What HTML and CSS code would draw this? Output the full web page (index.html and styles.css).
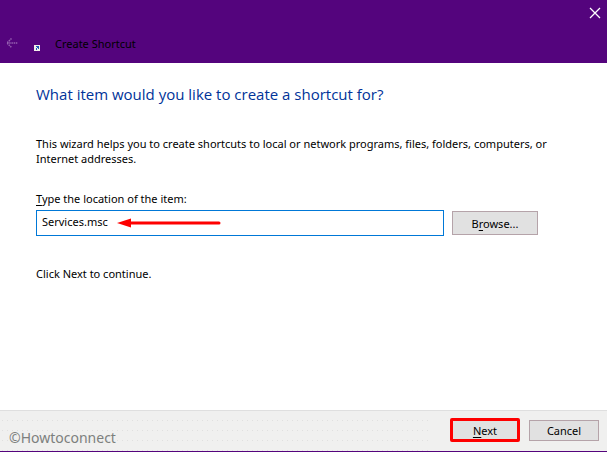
FILE: index.html
```html
<!DOCTYPE html>
<html lang="en">
<head>
<meta charset="utf-8">
<title>Create Shortcut</title>
<link rel="stylesheet" href="styles.css">
</head>
<body>
<form class="wizard">
  <header class="titlebar">
    <div class="window-controls">
      <button class="icon-button" type="button" aria-label="Close">
        <svg width="12" height="12" viewBox="0 0 12 12"><path d="M1 1l10 10M11 1L1 11" fill="none" stroke="#fff" stroke-width="1.3"/></svg>
      </button>
    </div>
    <div class="caption">
      <button class="icon-button back" type="button" aria-label="Back" disabled>
        <svg width="12" height="10" viewBox="0 0 12 10"><path d="M5.5 .5L1 5l4.500 4.500M1 5h11" fill="none" stroke="#9560b0" stroke-width="1.500" stroke-dasharray="1.500 .7"/></svg>
      </button>
      <svg class="shortcut-icon" width="6" height="6" viewBox="0 0 6 6"><path fill="#f1eee9" d="M0 0h6v6H0z"/><path fill="#1958b8" d="M2 1h3v3H4V3H3v2H2V3h1V2H2z"/></svg>
      <span class="title">Create Shortcut</span>
    </div>
  </header>
  <main class="content">
    <h1>What item would you like to create a shortcut for?</h1>
    <p class="intro">This wizard helps you to create shortcuts to local or network programs, files, folders, computers, or<br>Internet addresses.</p>
    <label for="location"><u>T</u>ype the location of the item:</label>
    <div class="location-row">
      <div class="field">
        <input id="location" type="text" value="Services.msc">
        <svg class="arrow" width="104" height="10" viewBox="0 0 104 10"><path d="M12 5h90" stroke="#fe0000" stroke-width="3" stroke-linecap="round"/><path d="M0 5L14 .5v9z" fill="#fe0000"/></svg>
      </div>
      <button class="button" type="button"><span>B<u>r</u>owse...</span></button>
    </div>
    <p class="hint">Click Next to continue.</p>
  </main>
  <footer class="footer">
    <span class="watermark">©Howtoconnect</span>
    <button class="button next" type="submit"><span><u>N</u>ext</span></button>
    <button class="button cancel" type="button">Cancel</button>
  </footer>
</form>
</body>
</html>
```
FILE: styles.css
```css
* { box-sizing: border-box; }

body {
  margin: 0;
  font: 11px/15px "Noto Sans", "Open Sans", sans-serif;
  color: #000;
  background: #fff;
}

h1, p { margin: 0; }

u { text-underline-offset: 2px; text-decoration-skip-ink: none; }

.wizard {
  display: flex;
  flex-direction: column;
  min-height: 100vh;
  border-bottom: 1px solid #54047d;
}

.titlebar {
  height: 63px;
  background: #54047d;
}

.window-controls {
  display: flex;
  justify-content: flex-end;
  padding: 7px 6px 0;
}

.icon-button {
  display: flex;
  padding: 0;
  border: 0;
  background: none;
}

.caption {
  display: flex;
  align-items: center;
  padding: 16px 6px 0;
}

.shortcut-icon { margin: 10px 15px 0 16px; }

.content {
  flex: 1;
  padding: 20px 36px;
}

h1 {
  margin-bottom: 31px;
  color: #003399;
  font-family: "Open Sans", "Noto Sans", sans-serif;
  font-size: 15px;
  font-weight: 400;
  line-height: 22px;
}

.intro {
  margin-bottom: 25px;
  white-space: nowrap;
}

label {
  display: block;
  margin-bottom: 4px;
}

.location-row {
  display: flex;
  align-items: center;
  gap: 8px;
  margin: 0 33px 30px 0;
}

.field {
  position: relative;
  flex: 1;
}

input {
  display: block;
  width: 100%;
  height: 26px;
  padding: 0 5px 4px;
  border: 1px solid #0078d7;
  background: #fff;
  color: inherit;
  font: inherit;
}

.arrow {
  position: absolute;
  top: 8px;
  left: 81px;
}

.button {
  width: 86px;
  height: 24px;
  padding: 0;
  border: 1px solid #b5a3a9;
  background: #e1e1e1;
  color: inherit;
  font: inherit;
}

.footer {
  display: flex;
  align-items: center;
  height: 41px;
  padding: 0 8px 2px 9px;
  border-top: 1px solid #dfdfdf;
  background: #f0f0ef;
  background-image:
    linear-gradient(90deg, transparent 430px, #f0f0ef 430px),
    linear-gradient(#f0f0ef 9px, transparent 9px),
    linear-gradient(90deg, #f0f0ef 4px, transparent 4px),
    linear-gradient(#e0e0df, #e0e0df);
  background-position: 0 0, 0 0, 3px 0, 0 0;
  background-size: auto, 5px 10px, 5px 10px, auto;
}

.watermark {
  margin: 14px auto 0 0;
  color: #7d807e;
  font-size: 14px;
}

.next {
  margin-right: 9px;
  border: 3px solid #fe0000;
  border-radius: 2px;
}

.footer .button { width: 70px; }

.footer .cancel { height: 21px; }
```
